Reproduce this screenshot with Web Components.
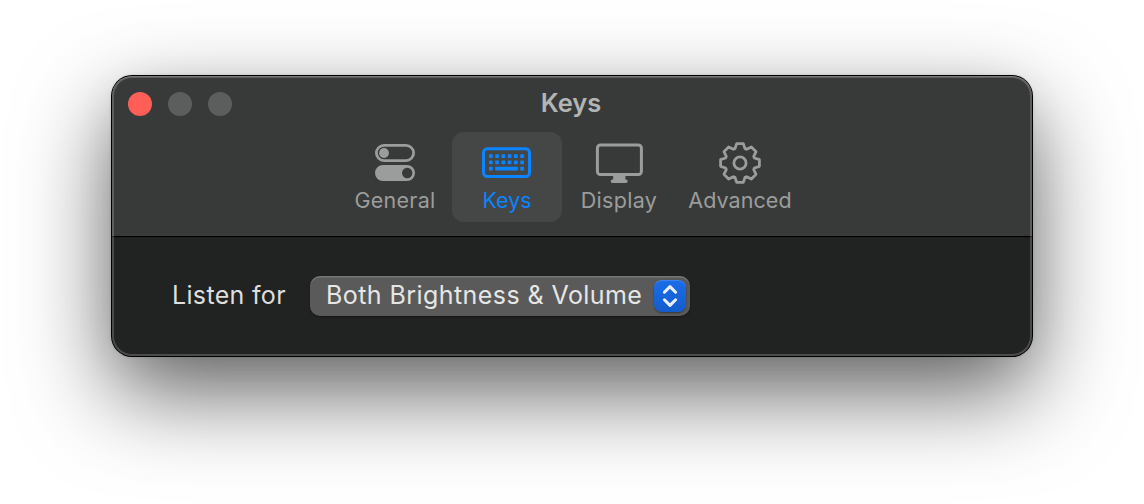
<!DOCTYPE html>
<html lang="en">
<head>
<meta charset="utf-8">
<title>Keys</title>
<style>
html, body { margin: 0; height: 100%; background: #fff; overflow: hidden; }
body { font-family: Inter, "Liberation Sans", sans-serif; box-sizing: border-box; padding: 76px 112px 0; }
</style>
</head>
<body>
<settings-window>
  <window-header slot="header" heading="Keys">
    <toolbar-tab icon="switches" label="General" style="--track:.25px"></toolbar-tab>
    <toolbar-tab icon="keyboard" label="Keys" selected style="--track:0px"></toolbar-tab>
    <toolbar-tab icon="display" label="Display" style="--track:.3px"></toolbar-tab>
    <toolbar-tab icon="gear" label="Advanced" style="--cell:128px;--track:.07px"></toolbar-tab>
  </window-header>
  <setting-row label="Listen for">
    <popup-button>Both Brightness &amp; Volume</popup-button>
  </setting-row>
</settings-window>
<script>
class Base extends HTMLElement {
  constructor() {
    super();
    this.attachShadow({ mode: 'open' });
  }
  connectedCallback() { this.shadowRoot.innerHTML = this.render(); }
}

customElements.define('settings-window', class extends Base {
  render() {
    return `<style>
      :host { display: flex; flex-direction: column; position: relative; box-sizing: border-box;
        width: 920px; height: 280px; border-radius: 20px; background: #212322;
        box-shadow: 0 0 0 1px #000, 0 0 3px 1px rgba(0,0,0,.12), 0 36px 92px rgba(0,0,0,.62), 0 10px 40px rgba(0,0,0,.06); }
      .clip { display: flex; flex-direction: column; height: 100%; border-radius: inherit; overflow: hidden; }
      .rim { position: absolute; inset: 0; border-radius: inherit; pointer-events: none;
        box-shadow: inset 0 0 0 2px rgba(255,255,255,.19), inset 0 1px 0 rgba(255,255,255,.16); }
      main { flex: 1; display: flex; align-items: flex-start; padding: 38px 60px 0; }
    </style>
    <div class="clip"><slot name="header"></slot><main><slot></slot></main></div><div class="rim"></div>`;
  }
});

customElements.define('window-header', class extends Base {
  render() {
    return `<style>
      :host { display: block; height: 162px; box-sizing: border-box; background: #383a39; border-bottom: 1px solid #1b1d1c; box-shadow: inset 0 -1px 0 #000; }
      .bar { display: grid; grid-template-columns: 1fr auto 1fr; align-items: center; height: 56px; padding: 0 16px; }
      .lights { display: flex; gap: 16px; }
      i { width: 24px; height: 24px; border-radius: 50%; background: #5c5e5d; }
      i:first-child { background: #ff5f57; }
      h1 { margin: 0; padding: 0 2px 2px 0; font-size: 25.5px; font-weight: 600; line-height: 32px; color: #b3b4b4; }
      nav { display: flex; justify-content: center; gap: 2px; }
    </style>
    <div class="bar"><div class="lights"><i></i><i></i><i></i></div><h1>${this.getAttribute('heading')}</h1></div>
    <nav><slot></slot></nav>`;
  }
});

function gearPath() {
  const tooth = [[-5, -14.4], [-3.3, -19.4], [3.3, -19.4], [5, -14.4]];
  let d = '';
  for (let k = 0; k < 8; k++) {
    const a = k * Math.PI / 4, c = Math.cos(a), s = Math.sin(a);
    for (const [x, y] of tooth)
      d += (d ? 'L' : 'M') + (x * c - y * s).toFixed(2) + ' ' + (x * s + y * c).toFixed(2);
  }
  return d + 'Z';
}
function keyDots() {
  let out = '';
  for (const y of [-8.8, -2.5])
    for (let i = 0; i < 6; i++) out += `<rect x="${-18 + i * 6.25}" y="${y}" width="3.7" height="3.7" rx=".6"/>`;
  return out + '<rect x="-18" y="3.8" width="3.7" height="3.7" rx=".6"/><rect x="-11.8" y="3.8" width="22.7" height="3.7" rx=".8"/><rect x="13.25" y="3.8" width="3.7" height="3.7" rx=".6"/>';
}
const icons = {
  switches: `<rect x="-18.6" y="-17.6" width="37.2" height="15.2" rx="7.6" fill="none" stroke="currentColor" stroke-width="2.8"/>
    <circle cx="-11" cy="-10" r="4.9"/>
    <path fill-rule="evenodd" d="M-12 2H12a8 8 0 0 1 0 16H-12a8 8 0 0 1 0-16ZM12.2 4.8a5.2 5.2 0 1 0 0 10.4a5.2 5.2 0 0 0 0-10.4Z"/>`,
  keyboard: `<rect x="-23.5" y="-14.3" width="46" height="27.8" rx="4" fill="none" stroke="currentColor" stroke-width="3"/>${keyDots()}`,
  display: `<rect x="-21.6" y="-18" width="44" height="29.6" rx="3" fill="none" stroke="currentColor" stroke-width="3"/>
    <path d="M-5.8 12H6.4V16.6H7a1.6 1.6 0 0 1 0 3.4H-6.6a1.6 1.6 0 0 1 0-3.4H-5.8Z"/>`,
  gear: `<g fill="none" stroke="currentColor" stroke-width="2.8" stroke-linejoin="round"><path d="${gearPath()}"/><circle r="6.1"/></g>`
};

customElements.define('toolbar-tab', class extends Base {
  render() {
    return `<style>
      :host { display: flex; flex-direction: column; align-items: center; box-sizing: border-box;
        width: var(--cell, 110px); height: 90px; padding-top: 7px; border-radius: 12px; color: #9b9d9c; }
      :host([selected]) { background: #454746; color: #0a84ff; }
      svg { display: block; width: 56px; height: 48px; fill: currentColor; }
      span { margin-top: -1px; font-size: 21.5px; line-height: 28px; letter-spacing: var(--track, 0); white-space: nowrap; }
    </style>
    <svg viewBox="-28 -24 56 48">${icons[this.getAttribute('icon')]}</svg><span>${this.getAttribute('label')}</span>`;
  }
});

customElements.define('setting-row', class extends Base {
  render() {
    return `<style>
      :host { display: flex; align-items: center; }
      label { width: 138px; padding-bottom: 2px; font-size: 25px; line-height: 38px; letter-spacing: .33px; color: #dededd; white-space: nowrap; }
    </style><label>${this.getAttribute('label')}</label><slot></slot>`;
  }
});

customElements.define('popup-button', class extends Base {
  render() {
    return `<style>
      :host { display: flex; align-items: center; justify-content: space-between; box-sizing: border-box;
        width: 380px; height: 40px; padding: 0 4px 0 16px; border-radius: 10px; background: #5a5a5a;
        box-shadow: inset 0 1.5px 0 rgba(255,255,255,.17), 0 1px 2px rgba(0,0,0,.45); }
      span { padding-bottom: 2px; font-size: 25px; line-height: 38px; letter-spacing: .43px; color: #e6e6e6; white-space: nowrap; }
      svg { display: block; width: 32px; height: 32px; border-radius: 8px;
        background: linear-gradient(#1b6dea, #145ccb);
        box-shadow: inset 0 1px 0 rgba(255,255,255,.15), 0 1px 2px rgba(0,0,0,.4); }
    </style><span><slot></slot></span>
    <svg viewBox="0 0 32 32" fill="none" stroke="#e8effc" stroke-width="3" stroke-linecap="round" stroke-linejoin="round"><path d="M10.4 12.2L16 6.6L21.6 12.2M10.4 19.8L16 25.4L21.6 19.8"/></svg>`;
  }
});
</script>
</body>
</html>
